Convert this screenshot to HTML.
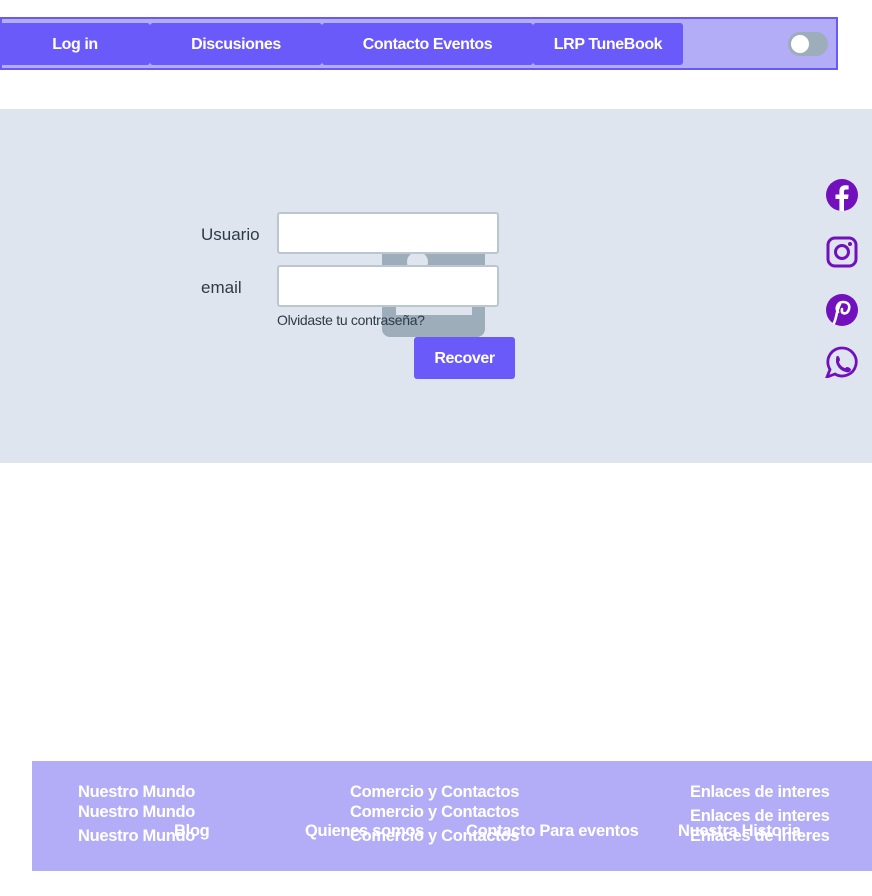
<!DOCTYPE html>
<html><head><meta charset="utf-8"><style>
*{margin:0;padding:0;box-sizing:border-box}
body{width:872px;height:896px;background:#fff;font-family:"Liberation Sans",sans-serif;position:relative;overflow:hidden}
.a{position:absolute}
.nav{left:0;top:17px;width:838px;height:53px;background:#b3acf7;border:2px solid #6a5af5}
.btn{top:23px;height:42px;background:#6a5af9;color:#fff;font-weight:bold;font-size:16px;letter-spacing:-0.4px;display:flex;align-items:center;justify-content:center;border-radius:3px;padding-top:2px}
.gray{left:0;top:109px;width:872px;height:354px;background:#dfe5ee}
.inp{left:277px;width:222px;height:42px;background:#fff;border:2px solid #bcc6d1;border-radius:3px}
.lbl{font-size:17px;color:#2f3a47}
.foot{left:32px;top:761px;width:840px;height:110px;background:#b3adf7}
.f{color:#fff;font-weight:bold;font-size:16.5px;letter-spacing:-0.3px;white-space:nowrap}
</style></head><body>
<div class="a nav"></div>
<div class="a btn" style="left:0;width:150px">Log in</div>
<div class="a btn" style="left:150px;width:172px">Discusiones</div>
<div class="a btn" style="left:322px;width:211px">Contacto Eventos</div>
<div class="a btn" style="left:533px;width:150px">LRP TuneBook</div>
<div class="a" style="left:788px;top:32px;width:40px;height:24px;border-radius:12px;background:#9eadba"></div>
<div class="a" style="left:791px;top:35px;width:18px;height:18px;border-radius:9px;background:#fff"></div>

<div class="a gray"></div>
<div class="a" style="left:382px;top:230px;width:103px;height:107px;background:#9eadba;border-radius:0 0 8px 8px"></div>
<div class="a" style="left:407px;top:252px;width:21px;height:20px;border-radius:10px;background:#dfe5ee"></div>
<div class="a" style="left:396px;top:307px;width:76px;height:8px;background:#dfe5ee"></div>
<div class="a lbl" style="left:201px;top:225px">Usuario</div>
<div class="a lbl" style="left:201px;top:278px">email</div>
<div class="a inp" style="top:212px"></div>
<div class="a inp" style="top:265px"></div>
<div class="a" style="left:277px;top:312px;font-size:14px;color:#2f3a47;letter-spacing:-0.3px">Olvidaste tu contraseña?</div>
<div class="a btn" style="left:414px;top:337px;width:101px;height:42px">Recover</div>

<svg class="a" style="left:825px;top:178px" width="34" height="200" viewBox="0 0 34 200">
<circle cx="17" cy="17" r="16" fill="#7210be"/>
<path d="M19 33V21h4l.6-4.5H19v-2.8c0-1.300.4-2.200 2.200-2.200h2.400V7.500c-.4 0-1.800-.2-3.500-.2-3.400 0-5.700 2.100-5.700 5.900v3.300h-3.900V21h3.900v12z" fill="#fff"/>
<rect x="3" y="60" width="28" height="28" rx="7" fill="none" stroke="#7210be" stroke-width="3"/>
<circle cx="17" cy="74" r="6.5" fill="none" stroke="#7210be" stroke-width="3"/>
<circle cx="25" cy="66" r="2" fill="#7210be"/>
<circle cx="17" cy="132" r="16" fill="#7210be"/>
<path d="M15 126c-4 8-3 13-6 19M13 134c-3-4 0-10 5-10 5 0 7 3 6 7-1 4-4 5-6 4-2-1-1-3-1-4" fill="none" stroke="#fff" stroke-width="2.6" stroke-linecap="round"/>
<path d="M17 170a14 14 0 1 1-7 26l-8 3 3-7.5A14 14 0 0 1 17 170z" fill="none" stroke="#7210be" stroke-width="2.8"/>
<path d="M12 178c2-1 3 3 3 4s-1 1-1 2c1 3 3 5 6 6 1 0 1-1 2-1s4 1 4 3c-1 2-3 3-5 2-5-1-9-5-10-10 0-3 0-5 1-6z" fill="#7210be"/>
</svg>

<div class="a foot"></div>
<div class="a f" style="left:78px;top:783px">Nuestro Mundo</div>
<div class="a f" style="left:78px;top:803px">Nuestro Mundo</div>
<div class="a f" style="left:78px;top:827px">Nuestro Mundo</div>
<div class="a f" style="left:350px;top:783px">Comercio y Contactos</div>
<div class="a f" style="left:350px;top:803px">Comercio y Contactos</div>
<div class="a f" style="left:350px;top:827px">Comercio y Contactos</div>
<div class="a f" style="left:690px;top:783px">Enlaces de interes</div>
<div class="a f" style="left:690px;top:807px">Enlaces de interes</div>
<div class="a f" style="left:690px;top:827px">Enlaces de interes</div>
<div class="a f" style="left:174px;top:822px">Blog</div>
<div class="a f" style="left:305px;top:822px">Quienes somos</div>
<div class="a f" style="left:466px;top:822px">Contacto Para eventos</div>
<div class="a f" style="left:678px;top:822px">Nuestra Historia</div>
</body></html>
